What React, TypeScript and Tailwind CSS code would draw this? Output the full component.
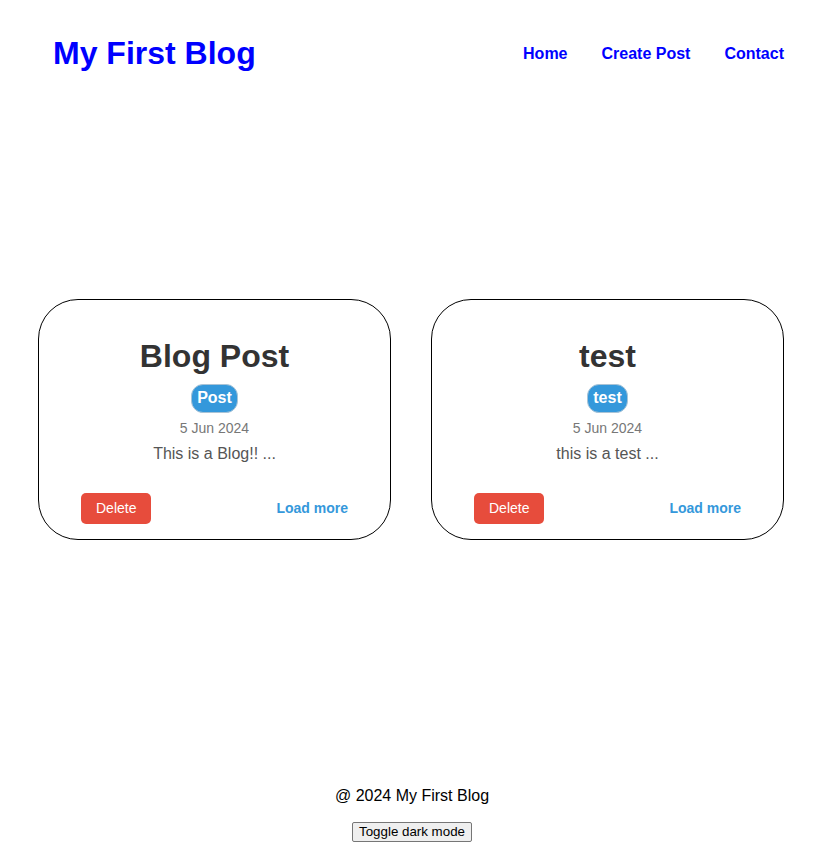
import React from "react";

const posts = [
  { title: "Blog Post", tag: "Post", date: "5 Jun 2024", body: "This is a Blog!! ..." },
  { title: "test", tag: "test", date: "5 Jun 2024", body: "this is a test ..." },
];

function Card({ p }: { p: (typeof posts)[number] }) {
  return (
    <div className="w-[353px] h-[241px] shrink-0 border border-black rounded-[40px] flex flex-col items-center pt-[38px]">
      <h2 className="text-[32px] leading-[37px] font-bold text-[#333]">{p.title}</h2>
      <span className="mt-[9px] h-[29px] px-[5px] flex items-center rounded-[12px] bg-[#3498db] border border-[#a9c3d6] text-white font-bold text-[16px]">
        {p.tag}
      </span>
      <p className="mt-[7px] text-[14px] leading-[16px] text-[#777]">{p.date}</p>
      <p className="mt-[9px] text-[16px] leading-[18px] text-[#555]">{p.body}</p>
      <div className="mt-[30px] w-full px-[42px] flex justify-between items-center">
        <button className="h-[31px] px-[15px] rounded-[5px] bg-[#e74c3c] text-white text-[14px]">Delete</button>
        <a className="text-[14px] font-bold text-[#3498db]">Load more</a>
      </div>
    </div>
  );
}

export default function App() {
  return (
    <div className="min-h-screen bg-white flex flex-col font-['Liberation_Sans',Arial,sans-serif] text-black">
      <header className="h-[106px] flex items-center justify-between pl-[53px] pr-[40px]">
        <h1 className="text-[32px] font-bold text-[#0000ff] leading-[37px]">My First Blog</h1>
        <nav className="mt-[2px] flex gap-[34px] text-[16px] font-bold text-[#0000ff]">
          <a>Home</a>
          <a>Create Post</a>
          <a>Contact</a>
        </nav>
      </header>
      <main className="h-[626px] flex items-center gap-[40px] pl-[38px]">
        {posts.map((p) => (
          <Card key={p.title} p={p} />
        ))}
      </main>
      <footer className="h-[120px] flex flex-col items-center pt-[55px]">
        <p className="text-[16px] leading-[18px]">@ 2024 My First Blog</p>
        <button className="mt-[17px] h-[20px] px-[6px] border border-[#767676] rounded-[2px] bg-[#efefef] text-[13.33px] leading-[16px] text-black">
          Toggle dark mode
        </button>
      </footer>
    </div>
  );
}
